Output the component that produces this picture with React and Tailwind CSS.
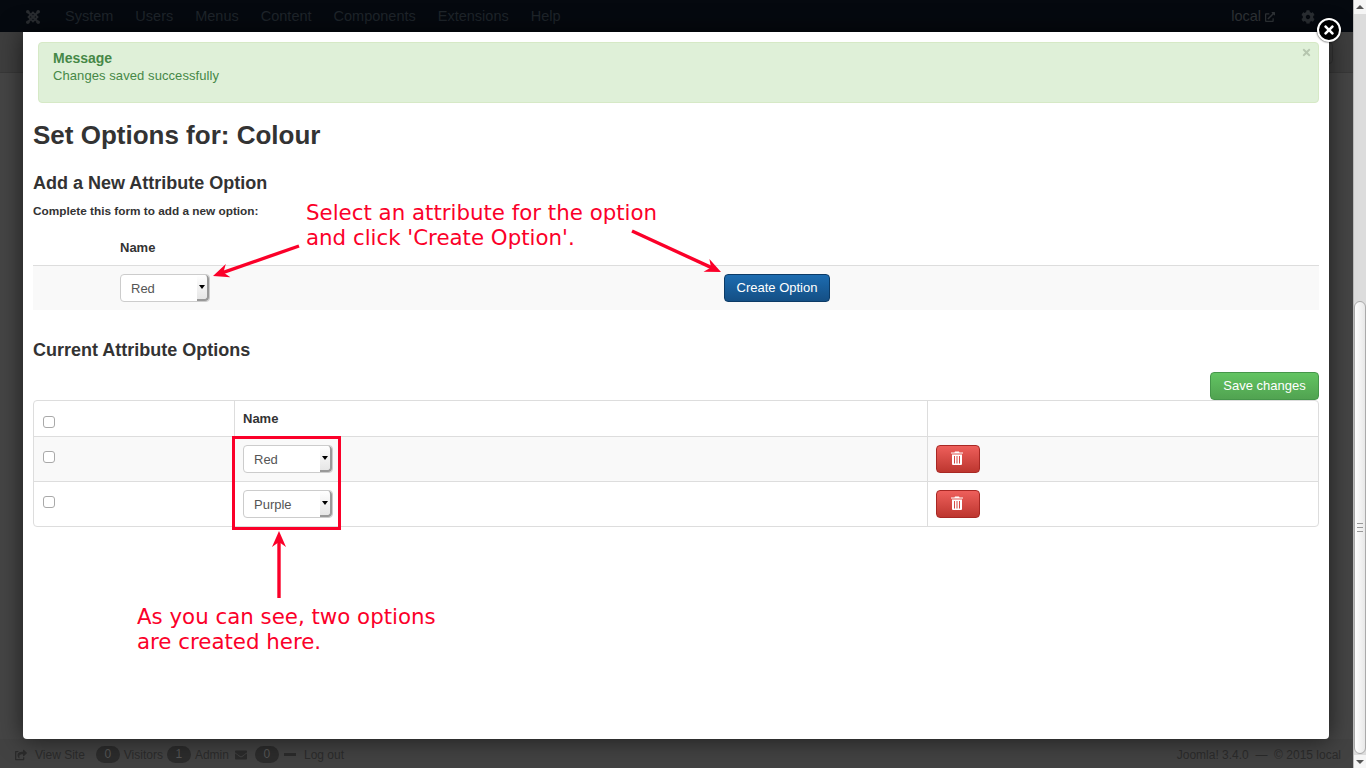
import { FaCog, FaEnvelope, FaExternalLinkAlt, FaShareSquare, FaTimes } from 'react-icons/fa';

const menuItems = ['System', 'Users', 'Menus', 'Content', 'Components', 'Extensions', 'Help'];

const JoomlaLogo = () => (
  <svg width="16" height="16" viewBox="0 0 16 16" fill="none" stroke="#2a2d31" strokeWidth="2.200">
    <path d="M3 3l10 10M13 3L3 13" />
    <path d="M8 3.500L3.500 8 8 12.500 12.500 8z" strokeWidth="1.800" />
    <circle cx="2.800" cy="2.800" r="1.800" fill="#2a2d31" stroke="none" />
    <circle cx="13.200" cy="2.800" r="1.800" fill="#2a2d31" stroke="none" />
    <circle cx="2.800" cy="13.200" r="1.800" fill="#2a2d31" stroke="none" />
    <circle cx="13.200" cy="13.200" r="1.800" fill="#2a2d31" stroke="none" />
  </svg>
);

const TrashIcon = () => (
  <svg width="14" height="14" viewBox="0 0 14 14" fill="#fff">
    <path d="M5 0.500h4l0.500 1H13v1H1v-1h3.500z" />
    <path fillRule="evenodd" d="M2 3.500h10V13a1 1 0 0 1-1 1H3a1 1 0 0 1-1-1zM4 5v7.500h1V5zM6.500 5v7.500h1V5zM9 5v7.500h1V5z" />
  </svg>
);

const Arrow = ({ x1, y1, x2, y2 }) => {
  const angle = Math.atan2(y2 - y1, x2 - x1);
  const point = (back, side) => {
    const x = x2 - back * Math.cos(angle) - side * Math.sin(angle);
    const y = y2 - back * Math.sin(angle) + side * Math.cos(angle);
    return `${x},${y}`;
  };
  return (
    <>
      <line x1={x1} y1={y1} x2={x2 - 8 * Math.cos(angle)} y2={y2 - 8 * Math.sin(angle)} stroke="#fb0029" strokeWidth="3.400" />
      <polygon points={`${x2},${y2} ${point(16, 7)} ${point(11, 0)} ${point(16, -7)}`} fill="#fb0029" />
    </>
  );
};

const SelectBox = ({ label }) => (
  <div className="flex h-7 w-[90px] items-stretch rounded border border-[#ccc] bg-white text-[13px] text-[#555]">
    <span className="flex-1 pl-[10px] leading-[28px]">{label}</span>
    <span className="relative w-3 rounded-r border-r-2 border-b-2 border-r-[#999] border-b-[#999] bg-gradient-to-b from-white to-[#e6e6e6]">
      <span className="absolute top-[10px] left-[2px] h-0 w-0 border-x-[3px] border-t-[4px] border-x-transparent border-t-black" />
    </span>
  </div>
);

const Checkbox = () => <span className="block h-3 w-3 rounded-[3px] border border-[#a9a9a9] bg-white" />;

const DeleteButton = () => (
  <button className="flex h-7 w-11 items-center justify-center rounded border border-[#a82824] bg-gradient-to-b from-[#ee5f5b] to-[#bd362f] pr-[3px] pb-[3px]">
    <TrashIcon />
  </button>
);

const App = () => {
  return (
    <div className="relative flex h-screen overflow-hidden bg-[#454545] font-['Liberation_Sans',Arial,sans-serif]">
      <div className="flex min-w-0 flex-1 flex-col">
        <header className="flex h-8 items-center bg-[#05090f] pt-px pr-[38px] text-[14.500px] text-[#1f252b]">
          <span className="mr-[24px] ml-[25px]"><JoomlaLogo /></span>
          <nav className="flex gap-[22px]">
            {menuItems.map((item) => (
              <span key={item}>{item}</span>
            ))}
          </nav>
          <span className="ml-auto flex items-center gap-1 text-[#2f3337]">
            local <FaExternalLinkAlt className="h-[10px] w-[10px]" />
          </span>
          <FaCog className="ml-[26px] h-[14px] w-[14px] text-[#2a2e32]" />
        </header>
        <div className="flex h-[41px] justify-end border-b border-[#383838] bg-[#3e3e3e] pt-[10px] pr-5">
          <div className="h-[22px] w-20 rounded border border-[#333]" />
        </div>
        <div className="flex-1" />
        <footer className="flex h-[29px] items-center justify-between bg-[#424242] pt-[2px] pr-[12px] pl-[15px] text-xs text-[#2b2b2b]">
          <div className="flex items-center">
            <FaShareSquare className="mr-[8px] h-[12px] w-[12px]" />
            <span className="mr-[11px]">View Site</span>
            <span className="mr-1 w-6 rounded-full bg-[#2c2c2c] text-center leading-[17px] text-[#555]">0</span>
            <span className="mr-1">Visitors</span>
            <span className="mr-1 w-6 rounded-full bg-[#2c2c2c] text-center leading-[17px] text-[#555]">1</span>
            <span className="mr-[6px]">Admin</span>
            <FaEnvelope className="mr-[8px] h-[12px] w-[12px]" />
            <span className="mr-[5px] w-6 rounded-full bg-[#2c2c2c] text-center leading-[17px] text-[#555]">0</span>
            <span className="mr-2 h-[3px] w-3 bg-[#2b2b2b]" />
            <span>Log out</span>
          </div>
          <span>Joomla! 3.4.0 &nbsp;— &nbsp;© 2015 local</span>
        </footer>
      </div>

      <aside className="flex w-[13px] flex-col border-l border-[#bbb] bg-[#dcdcdc] text-[#666]">
        <div className="flex h-[14px] items-center justify-center bg-[#f5f5f5]">
          <span className="h-0 w-0 border-x-[4px] border-b-[4px] border-x-transparent border-b-[#555]" />
        </div>
        <div className="flex-1">
          <div className="mt-[287px] flex h-[453px] flex-col items-center justify-center rounded-[6px] border border-[#aaa] bg-gradient-to-r from-white to-[#e8e8e8]">
            <span className="h-[9px] w-[6px] border-y border-[#999] py-[3px]"><span className="block h-px bg-[#999]" /></span>
          </div>
        </div>
        <div className="flex h-[13px] items-center justify-center bg-[#f5f5f5]">
          <span className="h-0 w-0 border-x-[4px] border-t-[4px] border-x-transparent border-t-[#555]" />
        </div>
      </aside>

      {/* modal */}
      <div className="absolute top-8 left-[23px] h-[707px] w-[1306px] rounded-b-[4px] bg-white px-[10px] pt-[10px] text-[#333] shadow-[0_0_24px_rgba(0,0,0,0.6)]">
        <div className="relative ml-[5px] h-[61px] rounded border border-[#d6e9c6] bg-[#dff0d8] pt-[7px] pl-[14px] text-[#468847]">
          <h4 className="text-sm leading-[17px] font-bold">Message</h4>
          <p className="text-[13px] leading-[17px] tracking-[0.08px]">Changes saved successfully</p>
          <FaTimes className="absolute top-1 right-[6px] h-[11px] w-[11px] text-[#b6c6af]" />
        </div>

        <h1 className="mt-[17px] text-[26px] leading-[30px] font-bold">Set Options for: Colour</h1>
        <h2 className="mt-[22px] text-lg leading-[22px] font-bold">Add a New Attribute Option</h2>
        <p className="mt-[10px] text-[11.800px] leading-[14px] font-bold">Complete this form to add a new option:</p>

        <div className="mt-[22px] pb-[9px] pl-[87px] text-[13px] leading-[16px] font-bold">Name</div>
        <div className="flex h-[45px] items-center border-t border-[#ddd] bg-[#f9f9f9] pl-[87px]">
          <SelectBox label="Red" />
          <button className="ml-[514px] h-7 w-[106px] rounded border border-[#0c3b66] bg-gradient-to-b from-[#1d6cb0] to-[#144f85] text-[13px] text-white">
            Create Option
          </button>
        </div>

        <h2 className="mt-[29px] text-lg leading-[22px] font-bold">Current Attribute Options</h2>
        <div className="mt-[11px] flex justify-end">
          <button className="h-7 w-[109px] rounded border border-[#45964a] bg-gradient-to-b from-[#62c462] to-[#51a351] text-[13px] text-white">
            Save changes
          </button>
        </div>

        <table className="w-full table-fixed border-separate border-spacing-0 rounded border border-[#ddd] text-[13px]">
          <colgroup>
            <col className="w-[201px]" />
            <col className="w-[693px]" />
            <col />
          </colgroup>
          <thead>
            <tr className="h-[35px]">
              <th className="border-r border-[#ddd] pt-[6px] pl-[9px] text-left"><Checkbox /></th>
              <th className="border-r border-[#ddd] pl-2 text-left font-bold">Name</th>
              <th />
            </tr>
          </thead>
          <tbody>
            {['Red', 'Purple'].map((name, index) => (
              <tr key={name} className={index === 0 ? 'h-[45px] bg-[#f9f9f9]' : 'h-[45px]'}>
                <td className="border-t border-r border-[#ddd] pb-1 pl-[9px]"><Checkbox /></td>
                <td className="border-t border-r border-[#ddd] pl-2"><SelectBox label={name} /></td>
                <td className="border-t border-[#ddd] pl-2"><DeleteButton /></td>
              </tr>
            ))}
          </tbody>
        </table>
      </div>

      {/* close button */}
      <button className="absolute top-[18px] left-[1317px] flex h-6 w-6 items-center justify-center rounded-full border-[2.500px] border-white bg-black text-white shadow-[0_0_2px_#000]">
        <FaTimes className="h-[14px] w-[14px]" />
      </button>

      {/* annotations */}
      <svg className="pointer-events-none absolute top-0 left-0" width="1366" height="768">
        <Arrow x1={299} y1={246} x2={213} y2={276} />
        <Arrow x1={632} y1={231} x2={721} y2={272} />
        <Arrow x1={279} y1={598} x2={279} y2={531} />
      </svg>
      <div className="pointer-events-none absolute top-[436px] left-[232px] h-[94px] w-[109px] border-[3px] border-[#fb0029]" />
      <p className="absolute top-[200px] left-[306px] font-['DejaVu_Sans',sans-serif] text-[21.330px] leading-[25px] text-[#fb0029]">
        Select an attribute for the option
        <br />
        and click 'Create Option'.
      </p>
      <p className="absolute top-[604px] left-[137px] font-['DejaVu_Sans',sans-serif] text-[21.330px] leading-[25px] text-[#fb0029]">
        As you can see, two options
        <br />
        are created here.
      </p>
    </div>
  );
};

export default App;
